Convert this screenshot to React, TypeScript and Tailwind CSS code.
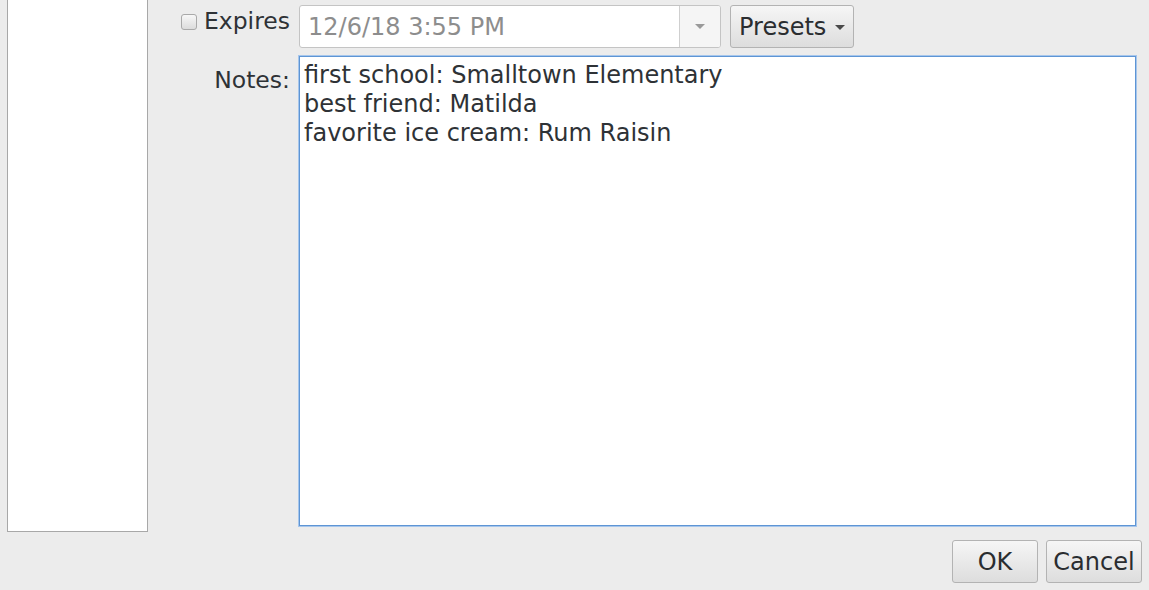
import React from "react";

const font = { fontFamily: '"DejaVu Sans", "Liberation Sans", sans-serif' };

export default function App() {
  return (
    <div
      className="flex h-[590px] w-[1149px] overflow-hidden bg-[#ececec] text-[23.5px] leading-[29px] text-[#2e3236]"
      style={font}
    >
      {/* left list panel */}
      <div className="pl-[7px]">
        <div className="h-[532px] w-[141px] border border-t-0 border-[#a8a8a8] bg-white" />
      </div>

      {/* form */}
      <div className="flex w-[1001px] flex-col">
        {/* Expires row */}
        <div className="flex pt-[5px]">
          <div className="flex w-[151px] items-start justify-end gap-[7px] pr-[9px]">
            <div className="mt-[9px] h-[16px] w-[16px] rounded-[3px] border border-[#a9a9a9] bg-gradient-to-b from-[#f7f7f7] to-[#dcdcdc]" />
            <span className="mt-[2px]">Expires</span>
          </div>
          <div className="flex h-[43px] w-[422px] overflow-hidden rounded-[3px] border border-[#c4c4c4] bg-white">
            <div className="flex flex-1 items-center pl-[8px] pt-[2px] text-[24px] text-[#8d8d8d]">
              12/6/18 3:55 PM
            </div>
            <div className="flex w-[41px] items-center justify-center border-l border-[#cfcfcf] bg-[#f5f5f5]">
              <div className="h-0 w-0 border-x-[5px] border-t-[5px] border-x-transparent border-t-[#9a9a9a]" />
            </div>
          </div>
          <div className="ml-[9px] flex h-[43px] w-[124px] items-center rounded-[3px] border border-[#b3b3b3] bg-gradient-to-b from-[#f6f6f6] to-[#dddddd] pl-[8px] pt-[2px] text-[#2a2d30]">
            <span className="text-[24px]">Presets</span>
            <div className="ml-[9px] h-0 w-0 border-x-[5px] border-t-[5px] border-x-transparent border-t-[#4a4a4a]" />
          </div>
        </div>

        {/* Notes row */}
        <div className="mt-[8px] flex">
          <div className="w-[151px] pr-[9px] pt-[10px] text-right">Notes:</div>
          <div className="h-[470px] w-[837px] whitespace-pre-line border border-[#5e95d4] bg-white px-[4px] pt-[4px] text-[24px] leading-[29px] shadow-[0_0_0_1px_#a6c6ec]">
            {"first school: Smalltown Elementary\nbest friend: Matilda\nfavorite ice cream: Rum Raisin"}
          </div>
        </div>

        {/* buttons */}
        <div className="mt-[14px] flex justify-end gap-[8px] pr-[7px]">
          <div className="flex h-[43px] w-[86px] items-center justify-center rounded-[3px] border border-[#b3b3b3] bg-gradient-to-b from-[#f6f6f6] to-[#dddddd] pt-[1px] text-[24px] text-[#2a2d30]">
            OK
          </div>
          <div className="flex h-[43px] w-[96px] items-center justify-center rounded-[3px] border border-[#b3b3b3] bg-gradient-to-b from-[#f6f6f6] to-[#dddddd] pt-[1px] text-[24px] text-[#2a2d30]">
            Cancel
          </div>
        </div>
      </div>
    </div>
  );
}
